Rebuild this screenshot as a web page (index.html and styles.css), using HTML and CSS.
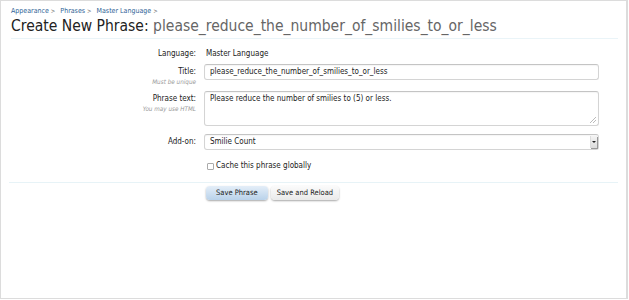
FILE: index.html
```html
<!DOCTYPE html>
<html>
<head>
<meta charset="utf-8">
<link rel="stylesheet" href="styles.css">
</head>
<body>
<div class="frame">
  <div class="breadcrumb">
    <a class="crumb">Appearance</a><span class="arrow">&gt;</span>
    <a class="crumb">Phrases</a><span class="arrow">&gt;</span>
    <a class="crumb">Master Language</a><span class="arrow">&gt;</span>
  </div>
  <h1 class="title">Create New Phrase: <span class="sub">please_reduce_the_number_of_smilies_to_or_less</span></h1>
  <form class="form">
    <div class="row row-lang">
      <div class="label"><span>Language:</span></div>
      <div class="ctrl"><span class="plain">Master Language</span></div>
    </div>
    <div class="row row-title">
      <div class="label"><span>Title:</span><span class="hint">Must be unique</span></div>
      <div class="ctrl"><div class="input">please_reduce_the_number_of_smilies_to_or_less</div></div>
    </div>
    <div class="row row-text">
      <div class="label"><span>Phrase text:</span><span class="hint">You may use HTML</span></div>
      <div class="ctrl"><div class="input textarea">Please reduce the number of smilies to (5) or less.<svg class="grip" width="6" height="6" viewBox="0 0 6 6"><path d="M6 0L0 6M6 3L3 6" stroke="#aaa" stroke-width="0.8"/></svg></div></div>
    </div>
    <div class="row row-addon">
      <div class="label"><span>Add-on:</span></div>
      <div class="ctrl"><div class="input select">Smilie Count<span class="drop"><span class="tri"></span></span></div></div>
    </div>
    <div class="row row-check">
      <div class="label"></div>
      <div class="ctrl"><label class="check"><span class="box"></span>Cache this phrase globally</label></div>
    </div>
    <div class="sep"></div>
    <div class="row row-buttons">
      <div class="label"></div>
      <div class="ctrl buttons">
        <span class="btn primary">Save Phrase</span>
        <span class="btn">Save and Reload</span>
      </div>
    </div>
  </form>
</div>
</body>
</html>
```
FILE: styles.css
```css
* { box-sizing: border-box; }
html, body { margin: 0; padding: 0; background: #fff; }
body {
  font-family: "DejaVu Sans Condensed", "DejaVu Sans", sans-serif;
  color: #222;
}
.frame {
  width: 628px;
  height: 299px;
  border: 1px solid #dcdcdc;
  border-right: 2px solid #dcdcdc;
  padding: 0 8px 0 10px;
}
.breadcrumb {
  display: flex;
  align-items: center;
  height: 11px;
  margin-top: 4px;
  font-size: 7px;
  color: #2e5f96;
}
.crumb { color: #2e5f96; }
.arrow { margin: 0 5px 0 2px; color: #555; font-size: 6px; }
.title {
  margin: 1px 0 0 0;
  font-weight: normal;
  font-size: 15.5px;
  line-height: 19px;
  color: #222;
  padding-bottom: 2px;
  border-bottom: 1px solid #eaf4f8;
}
.sub { color: #666; }
.form { display: block; }
.row { display: flex; align-items: flex-start; }
.label {
  width: 185px;
  height: 0;
  flex: none;
  display: flex;
  flex-direction: column;
  align-items: flex-end;
  font-size: 8px;
  line-height: 10px;
  color: #222;
}
.hint {
  font-size: 6.3px;
  line-height: 8px;
  font-style: italic;
  color: #999;
  margin-top: 1px;
}
.ctrl {
  margin-left: 8px;
  width: 395px;
  font-size: 8px;
  line-height: 10px;
}
.row-lang { margin-top: 10px; }
.plain { padding-left: 2px; }
.row-title { margin-top: 5px; }
.row-title .label { padding-top: 3px; }
.input {
  position: relative;
  height: 16px;
  border: 1px solid #d4d4d4;
  border-top-color: #c4c4c4;
  border-radius: 3px;
  padding: 2px 5px;
  line-height: 10px;
  background: #fff;
  box-shadow: inset 0 1px 1px rgba(0,0,0,0.04);
}
.row-text { margin-top: 11px; }
.row-text .label { padding-top: 3px; }
.textarea { height: 35px; padding-top: 2px; }
.grip { position: absolute; right: 2px; bottom: 2px; }
.row-addon { margin-top: 8px; }
.row-addon .label { padding-top: 3px; }
.select { height: 16px; padding-left: 5px; }
.drop {
  position: absolute;
  right: 1px;
  top: 1px;
  width: 7px;
  height: 12px;
  border-left: 1px solid #ddd;
  background: linear-gradient(#f4f4f4, #dcdcdc);
  box-shadow: 1px 1px 0 #999;
  display: flex;
  align-items: center;
  justify-content: center;
}
.tri {
  width: 0; height: 0;
  border-left: 2px solid transparent;
  border-right: 2px solid transparent;
  border-top: 2px solid #222;
}
.row-check { margin-top: 11px; }
.check { display: flex; align-items: center; padding-left: 3px; line-height: 10px; }
.box {
  width: 7px; height: 7px;
  border: 1px solid #aaa;
  border-radius: 1px;
  margin-right: 2px;
  background: #fff;
}
.sep {
  margin: 11px 0 0 -2px;
  height: 1px;
  background: #e7f3f7;
}
.row-buttons { margin-top: 3px; }
.buttons { display: flex; gap: 3px; padding-left: 2px; }
.btn {
  display: inline-block;
  height: 14px;
  line-height: 14px;
  padding: 0 6px;
  font-size: 7.5px;
  color: #222;
  border-radius: 4px;
  background: linear-gradient(#fbfbfb, #eaeaea);
  box-shadow: 0 1px 2px rgba(0,0,0,0.35);
}
.btn.primary {
  padding: 0 10px;
  background: linear-gradient(#e4eef8, #b9d2ea);
}
```
